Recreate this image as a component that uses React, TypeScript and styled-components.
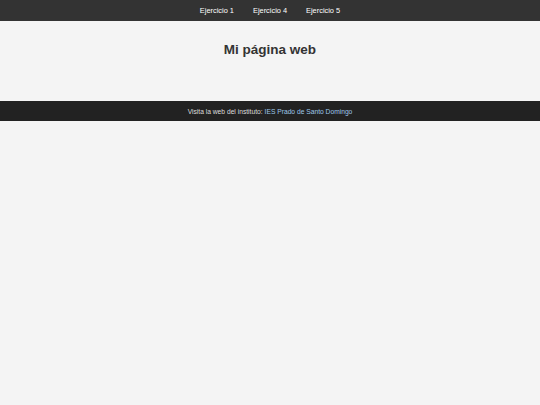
import React from "react";
import styled, { createGlobalStyle } from "styled-components";

const Global = createGlobalStyle`
  html, body { margin: 0; padding: 0; background: #f4f4f4; }
  body { font-family: "Liberation Sans", Arial, sans-serif; }
`;

const Nav = styled.nav`
  height: 21px;
  background: #333333;
  display: flex;
  justify-content: center;
  align-items: center;
  gap: 19px;
`;

const NavLink = styled.a`
  color: #ffffff;
  font-size: 7.4px;
  text-decoration: none;
  line-height: 21px;
`;

const Header = styled.header`
  height: 80px;
  box-sizing: border-box;
  padding-top: 21px;
  text-align: center;
`;

const Title = styled.h1`
  margin: 0;
  font-size: 13.5px;
  line-height: 16px;
  font-weight: bold;
  color: #333333;
`;

const Footer = styled.footer`
  height: 20px;
  background: #222222;
  color: #dddddd;
  font-size: 6.7px;
  display: flex;
  justify-content: center;
  align-items: center;
`;

const FootLink = styled.a`
  color: #9ec7e8;
  text-decoration: none;
  margin-left: 2px;
`;

export default function App() {
  return (
    <>
      <Global />
      <Nav>
        <NavLink href="#">Ejercicio 1</NavLink>
        <NavLink href="#">Ejercicio 4</NavLink>
        <NavLink href="#">Ejercicio 5</NavLink>
      </Nav>
      <Header>
        <Title>Mi página web</Title>
      </Header>
      <Footer>
        <span>Visita la web del instituto:</span>
        <FootLink href="#">IES Prado de Santo Domingo</FootLink>
      </Footer>
    </>
  );
}
